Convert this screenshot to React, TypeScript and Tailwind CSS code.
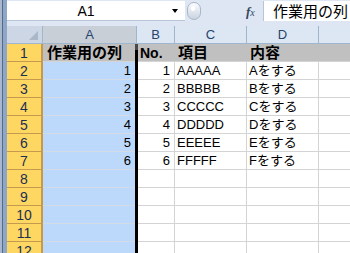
import React from 'react';

type Row = {
  num: number;
  a?: string;
  b?: string;
  c?: string;
  d?: string;
};

const rows: Row[] = [
  { num: 2, a: '1', b: '1', c: 'AAAAA', d: 'Aをする' },
  { num: 3, a: '2', b: '2', c: 'BBBBB', d: 'Bをする' },
  { num: 4, a: '3', b: '3', c: 'CCCCC', d: 'Cをする' },
  { num: 5, a: '4', b: '4', c: 'DDDDD', d: 'Dをする' },
  { num: 6, a: '5', b: '5', c: 'EEEEE', d: 'Eをする' },
  { num: 7, a: '6', b: '6', c: 'FFFFF', d: 'Fをする' },
  { num: 8 },
  { num: 9 },
  { num: 10 },
  { num: 11 },
  { num: 12 },
];

const font = { fontFamily: '"Liberation Sans", "Noto Sans CJK JP", sans-serif' };

function RowHeader({ n }: { n: number }) {
  return (
    <div className="w-[36px] h-full shrink-0 box-border border-r-2 border-b border-[#c39a4e] bg-[#fed763] flex items-center justify-center text-[14px] text-[#1c2f52] leading-none">
      {n}
    </div>
  );
}

export default function App() {
  return (
    <div className="w-[350px] h-[253px] overflow-hidden flex bg-white" style={font}>
      {/* window frame */}
      <div className="w-[7px] h-full shrink-0 flex">
        <div className="w-[2px] bg-[#a9b8cc]" />
        <div className="w-[1px] bg-[#55698a]" />
        <div className="flex-1 bg-[#8fa7c7]" />
      </div>

      <div className="flex-1 flex flex-col min-w-0">
        {/* formula bar */}
        <div className="h-[26px] shrink-0 bg-[#dde6f2] flex items-start">
          <div className="mt-[1px] h-[20px] w-[178px] box-border bg-white border-b border-[#b7c5d8] flex items-center">
            <div className="w-[158px] text-center text-[14px] text-black leading-none">A1</div>
            <div className="ml-[7px] w-0 h-0 border-l-[3px] border-r-[3px] border-t-[4px] border-l-transparent border-r-transparent border-t-black" />
          </div>
          <div className="mt-[2px] ml-[2px] w-[14px] h-[18px] rounded-full border border-[#a9b7c9] bg-gradient-to-b from-[#fbfcfe] to-[#c9d3e0] flex items-start justify-start">
            <div className="mt-[3px] ml-[3px] w-[4px] h-[5px] rounded-full bg-white" />
          </div>
          <div className="ml-[45px] mt-[5px] w-[15px] text-[13px] text-[#33475f] leading-none" style={{ fontFamily: '"Liberation Serif", serif' }}>
            <span className="italic font-bold">f</span>
            <span className="italic text-[10px]">x</span>
          </div>
          <div className="ml-[2px] mt-[1px] h-[20px] flex-1 box-border bg-white border-l border-[#b7c5d8] pl-[9px] flex items-center text-[15px] text-black leading-none whitespace-nowrap overflow-hidden">
            作業用の列
          </div>
        </div>

        {/* column headers */}
        <div className="h-[18px] shrink-0 flex box-border border-b border-[#9eb6ce] text-[13px] text-[#27446e] leading-none">
          <div className="w-[36px] shrink-0 box-border border-r border-[#9eb6ce] bg-[#ccd6e4] flex items-end justify-end pr-[4px] pb-[3px]">
            <div className="w-0 h-0 border-l-[9px] border-t-[9px] border-l-transparent border-t-transparent border-r-0 border-b-0" style={{ borderBottom: '9px solid #a9b7c9', borderLeft: '9px solid transparent', borderTop: 0 }} />
          </div>
          <div className="w-[94px] shrink-0 box-border border-r border-[#9eb6ce] bg-[#c9cfd7] flex items-center justify-center">A</div>
          <div className="w-[38px] shrink-0 box-border border-r border-[#9eb6ce] bg-[#dde7f4] flex items-center justify-center">B</div>
          <div className="w-[72px] shrink-0 box-border border-r border-[#9eb6ce] bg-[#dde7f4] flex items-center justify-center">C</div>
          <div className="w-[72px] shrink-0 box-border border-r border-[#9eb6ce] bg-[#dde7f4] flex items-center justify-center">D</div>
          <div className="flex-1 bg-[#dde7f4]" />
        </div>

        {/* row 1 */}
        <div className="h-[18px] shrink-0 flex">
          <RowHeader n={1} />
          <div className="w-[92px] shrink-0 box-border border-b border-[#d4d4d4] bg-[#c0c0c0] pl-[4px] flex items-end pb-[1px] text-[15px] font-bold text-black leading-none">
            作業用の列
          </div>
          <div className="w-[3px] shrink-0 flex flex-col">
            <div className="h-[6px] bg-[#4a4a4a]" />
            <div className="flex-1 bg-black" />
          </div>
          <div className="flex-1 box-border border-b border-[#d4d4d4] bg-[#c0c0c0] flex items-end pb-[1px] text-[14px] font-bold text-black leading-none">
            <div className="w-[37px] pl-[2px]">No.</div>
            <div className="w-[72px] pl-[3px] text-[15px]">項目</div>
            <div className="w-[72px] pl-[3px] text-[15px]">内容</div>
          </div>
        </div>

        {/* data rows */}
        {rows.map((r) => (
          <div key={r.num} className="h-[18px] shrink-0 flex text-[13px] text-black leading-none">
            <RowHeader n={r.num} />
            <div className="w-[92px] shrink-0 box-border border-b border-[#d3dbe6] bg-[#bcd9fb] flex items-end justify-end pr-[4px] pb-[2px]">
              {r.a}
            </div>
            <div className="w-[3px] shrink-0 bg-black" />
            <div className="w-[37px] shrink-0 box-border border-r border-b border-[#d4d4d4] flex items-end justify-end pr-[4px] pb-[2px]">
              {r.b}
            </div>
            <div className="w-[72px] shrink-0 box-border border-r border-b border-[#d4d4d4] flex items-end pl-[2px] pb-[2px]">
              {r.c}
            </div>
            <div className="w-[72px] shrink-0 box-border border-r border-b border-[#d4d4d4] flex items-end pl-[2px] pb-[2px] whitespace-nowrap">
              {r.d}
            </div>
            <div className="flex-1 box-border border-b border-[#d4d4d4]" />
          </div>
        ))}
      </div>
    </div>
  );
}
